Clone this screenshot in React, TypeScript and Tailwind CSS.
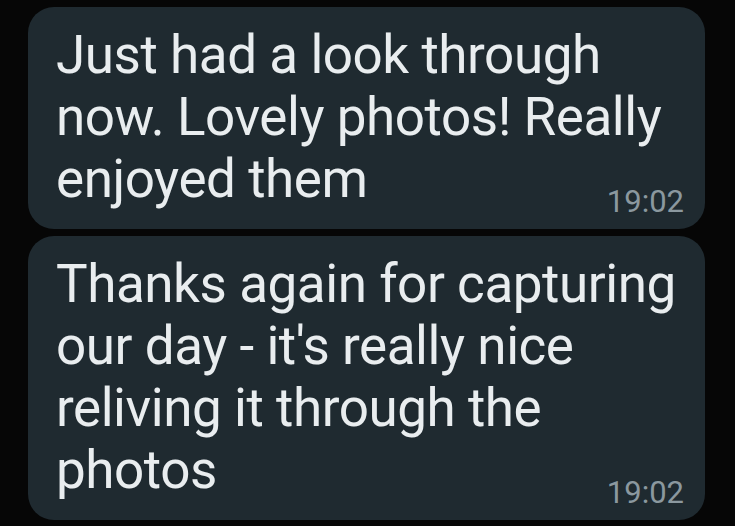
import React from "react";

const messages = [
  {
    text: "Just had a look through now. Lovely photos! Really enjoyed them",
    time: "19:02",
  },
  {
    text: "Thanks again for capturing our day - it's really nice reliving it through the photos",
    time: "19:02",
  },
];

export default function App() {
  return (
    <div
      className="w-[735px] h-[526px] overflow-hidden bg-[#060606] pt-[7px] pl-[28px] pr-[30px] flex flex-col gap-[7px]"
      style={{ fontFamily: "Roboto, 'Noto Sans', sans-serif" }}
    >
      {messages.map((m, i) => (
        <div
          key={i}
          className="bg-[#1f2a30] rounded-[26px] pl-[28px] pr-[20px] pt-[17px] pb-[9px] flex flex-col"
        >
          <p className="text-[53px] leading-[62px] text-[#e9edef] tracking-[-0.45px]">
            {m.text}
          </p>
          <div className="flex justify-end -mt-[26px] pr-[1px]">
            <span className="text-[31px] leading-[36px] text-[#8b989f]">
              {m.time}
            </span>
          </div>
        </div>
      ))}
    </div>
  );
}
